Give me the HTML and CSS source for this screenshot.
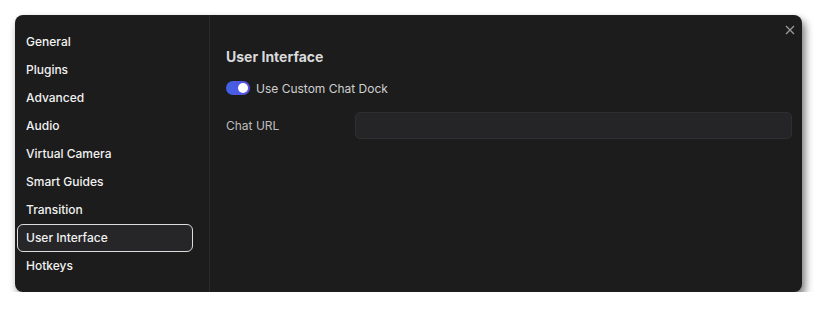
FILE: index.html
```html
<!DOCTYPE html>
<html lang="en">
<head>
    <meta charset="UTF-8">
    <meta name="viewport" content="width=device-width, initial-scale=1.0">
    <title>Settings</title>
    <link rel="stylesheet" href="styles.css">
</head>
<body>
    <div class="dialog">
        <nav class="sidebar">
            <div class="nav-item">General</div>
            <div class="nav-item">Plugins</div>
            <div class="nav-item">Advanced</div>
            <div class="nav-item">Audio</div>
            <div class="nav-item">Virtual Camera</div>
            <div class="nav-item">Smart Guides</div>
            <div class="nav-item">Transition</div>
            <div class="nav-item active">User Interface</div>
            <div class="nav-item">Hotkeys</div>
        </nav>
        <main class="content">
            <h2>User Interface</h2>
            <label class="toggle-row">
                <span class="toggle"><span class="knob"></span></span>
                <span>Use Custom Chat Dock</span>
            </label>
            <div class="field-row">
                <span class="field-label">Chat URL</span>
                <input type="text" class="field-input">
            </div>
        </main>
        <button class="close" aria-label="Close">
            <svg width="10" height="10" viewBox="0 0 10 10">
                <path d="M1 1L9 9M9 1L1 9" stroke="#9a9a9a" stroke-width="1.3" fill="none"/>
            </svg>
        </button>
    </div>
</body>
</html>
```

FILE: styles.css
```css
body {
    margin: 0;
    background: #ffffff;
    font-family: Inter, "Noto Sans", sans-serif;
    font-size: 12px;
}

.dialog {
    position: relative;
    display: flex;
    width: 787px;
    height: 277px;
    margin: 15px 0 0 15px;
    background: #1c1c1c;
    border-radius: 8px;
    box-shadow: 3px 5px 8px rgba(0, 0, 0, 0.55);
}

.sidebar {
    width: 192px;
    padding: 13px 0 0 2px;
    border-right: 1px solid #2b2b2b;
}

.nav-item {
    height: 26px;
    line-height: 26px;
    width: 166px;
    padding-left: 8px;
    border: 1px solid transparent;
    border-radius: 6px;
    color: #f2f2f2;
    font-weight: 500;
}

.nav-item.active {
    background: #262628;
    border-color: #dcdcdc;
}

.content {
    flex: 1;
    padding: 32px 10px 0 16px;
}

.content h2 {
    margin: 0 0 11px;
    font-size: 14px;
    line-height: 20px;
    font-weight: 700;
    color: #dadada;
}

.toggle-row {
    display: flex;
    align-items: center;
    gap: 6px;
    height: 20px;
    color: #cfcfcf;
}

.toggle {
    position: relative;
    width: 24px;
    height: 14px;
    border-radius: 7px;
    background: linear-gradient(90deg, #3f63e6, #5b4ee0);
}

.knob {
    position: absolute;
    right: 2px;
    top: 2px;
    width: 10px;
    height: 10px;
    border-radius: 50%;
    background: #ffffff;
}

.field-row {
    display: flex;
    align-items: center;
    margin-top: 14px;
}

.field-label {
    width: 129px;
    color: #bdbdbd;
}

.field-input {
    flex: 1;
    height: 27px;
    box-sizing: border-box;
    background: #252527;
    border: 1px solid #2f2f31;
    border-radius: 5px;
    color: #ddd;
    outline: none;
}

.close {
    position: absolute;
    top: 9px;
    right: 6px;
    width: 12px;
    height: 12px;
    padding: 0;
    border: none;
    background: none;
    display: flex;
    align-items: center;
    justify-content: center;
}
```
